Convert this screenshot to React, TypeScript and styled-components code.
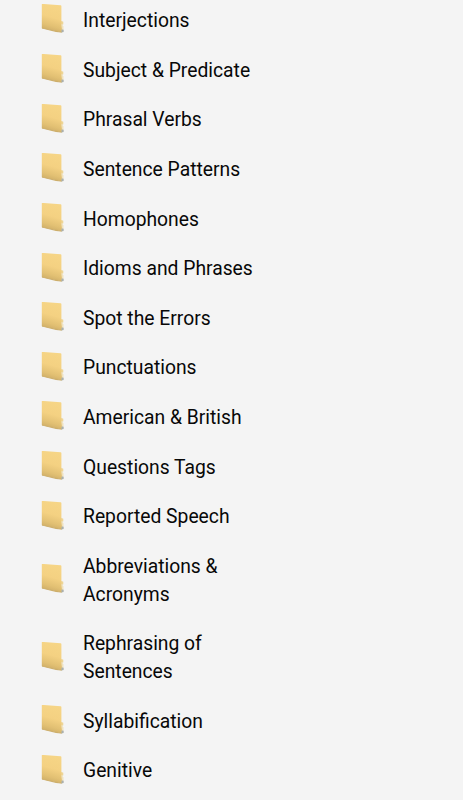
import React from "react";
import styled, { createGlobalStyle } from "styled-components";

const Global = createGlobalStyle`
  body { margin: 0; background: #f4f4f4; }
`;
const Page = styled.main`
  height: 800px;
  overflow: hidden;
  background: #f4f4f4;
  font-family: Roboto, "Liberation Sans", sans-serif;
  color: #080808;
`;
const List = styled.ul`
  list-style: none;
  margin: -4px 0 0;
  padding: 0 0 0 40px;
`;
const Row = styled.li`
  display: flex;
  align-items: center;
  padding: 11px 0 10.84px;
`;
const Icon = styled.svg`
  width: 26px;
  height: 32px;
  margin: -4px 17px -3px 0;
  flex: none;
`;
const Defs = styled.svg`
  display: block;
  width: 0;
  height: 0;
`;
const Label = styled.span`
  font-size: 19.3px;
  line-height: 27.8px;
  white-space: pre-line;
`;

const items = [
  "Interjections", "Subject & Predicate", "Phrasal Verbs", "Sentence Patterns", "Homophones",
  "Idioms and Phrases", "Spot the Errors", "Punctuations", "American & British", "Questions Tags",
  "Reported Speech", "Abbreviations &\nAcronyms", "Rephrasing of\nSentences", "Syllabification", "Genitive",
];

const FolderDefs = () => (
  <Defs>
    <defs>
      <linearGradient id="face" x1="0.5" y1="0" x2="0.3" y2="1">
        <stop offset="0" stopColor="#f6d586" />
        <stop offset="0.45" stopColor="#f4d182" />
        <stop offset="0.75" stopColor="#e2c073" />
        <stop offset="1" stopColor="#c9a964" />
      </linearGradient>
    </defs>
  </Defs>
);

const Folder = () => (
  <Icon viewBox="0 0 26 32" aria-hidden="true">
    <path d="M20.5 17L23.2 17.8V20.6L22.6 21.6L23.5 22.2V27.4H20.5Z" fill="#efe2bf" />
    <path d="M20.5 17.1L23.2 17.8V20.2L20.5 19.8Z" fill="#eed596" />
    <path d="M21.2 25.2L23.6 25.7V28.1L21 28.5Z" fill="#a9b0b0" />
    <path d="M2.3 -0.1L20.6 1.2Q21.4 1.3 21.4 2.2V21.8L21.9 24.9Q21.4 26.2 21.2 28.3L1.8 24.3V0.5Q1.8 -0.2 2.3 -0.1Z" fill="url(#face)" />
    <path d="M2 23.8L15 26.6L21.4 27.7L22.4 28.2L20.8 28.6L16 28L2 24.6Z" fill="#cdae6b" />
  </Icon>
);

export default function App() {
  return (
    <Page>
      <Global />
      <FolderDefs />
      <List>
        {items.map((t) => (
          <Row key={t}><Folder /><Label>{t}</Label></Row>
        ))}
      </List>
    </Page>
  );
}
